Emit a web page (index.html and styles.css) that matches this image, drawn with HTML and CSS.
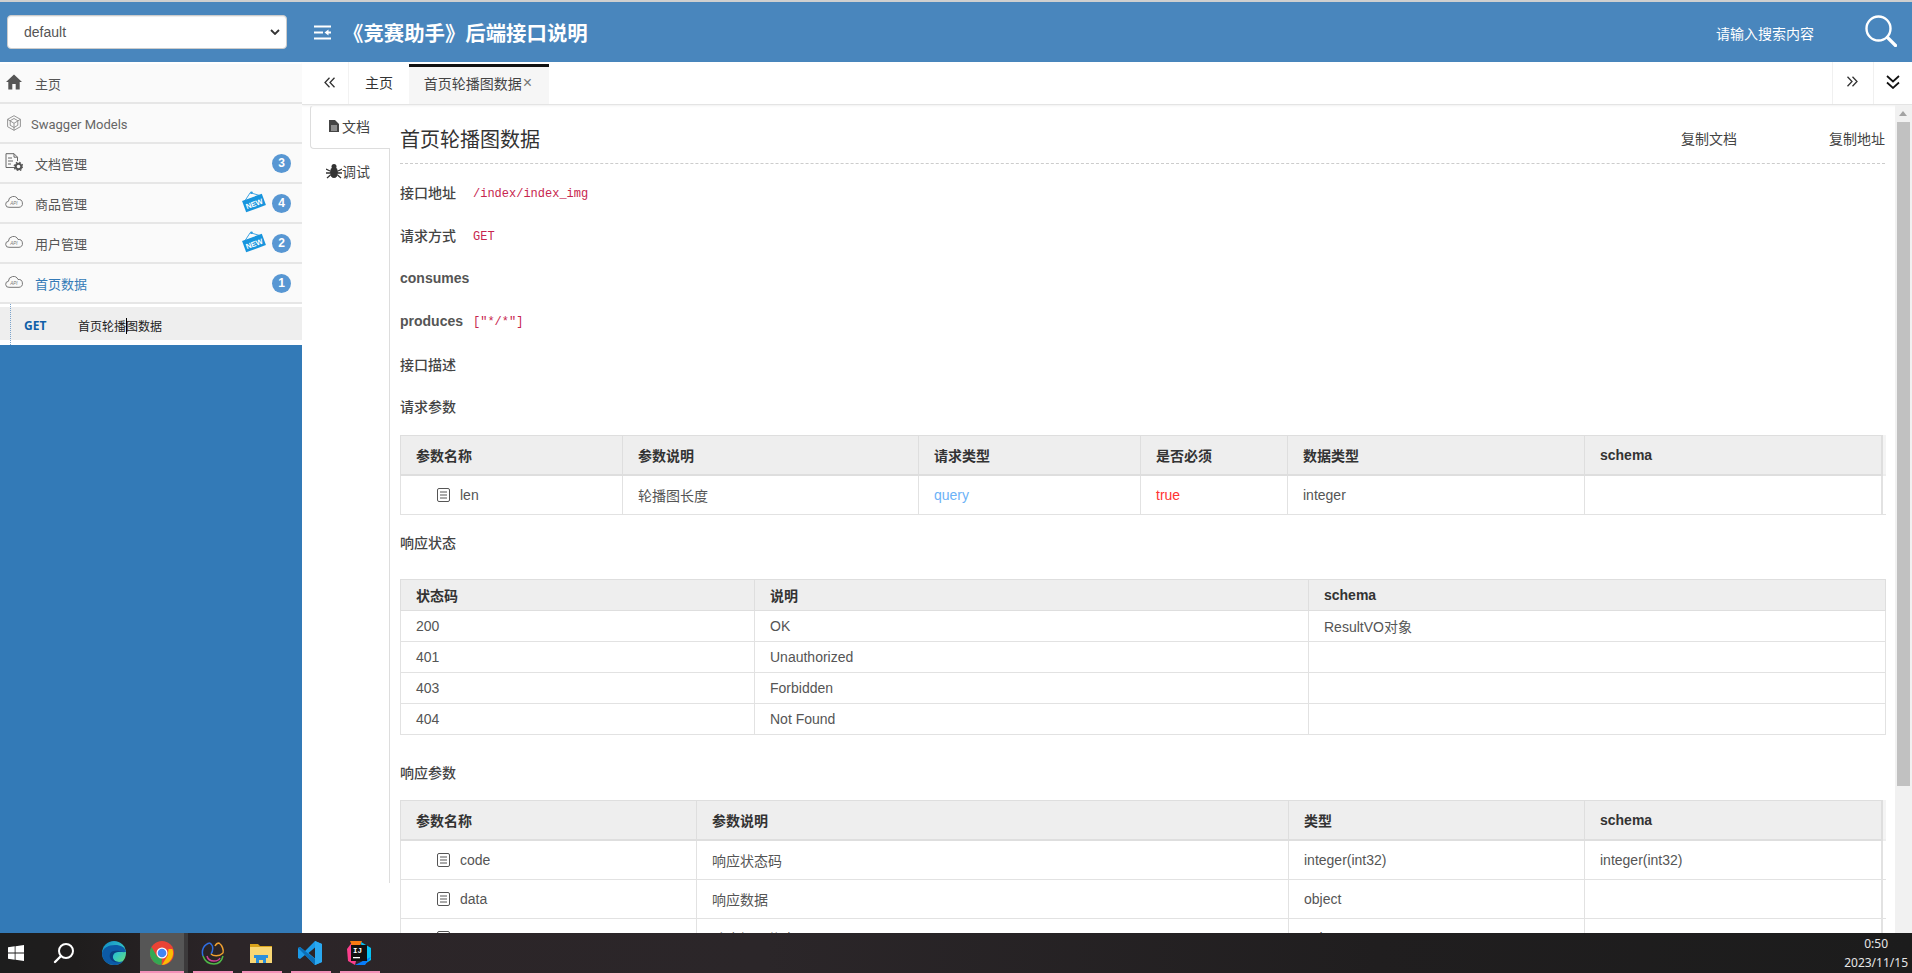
FILE: index.html
```html
<!DOCTYPE html>
<html lang="zh-CN">
<head>
<meta charset="utf-8">
<title>《竞赛助手》后端接口说明</title>
<link rel="stylesheet" href="styles.css">
</head>
<body>
<div class="app">
  <header class="topbar">
    <div class="select-box"><span>default</span>
      <svg class="select-arrow" viewBox="0 0 10 6" width="10" height="6"><path d="M1 1l4 4 4-4" fill="none" stroke="#333" stroke-width="1.8"/></svg>
    </div>
    <svg class="collapse-icon" viewBox="0 0 17 15" width="17" height="15"><path d="M0 1.500h17M0 7.500h9M0 13.500h17M17 7.500h-4" stroke="#fff" stroke-width="2.200" fill="none"/><path d="M14.500 4.500l-4 3 4 3z" fill="#fff"/></svg>
    <h1 class="app-title">《竞赛助手》后端接口说明</h1>
    <div class="search-text">请输入搜索内容</div>
    <svg class="search-icon" viewBox="0 0 32 32" width="32" height="32"><circle cx="13.500" cy="13.500" r="12" fill="none" stroke="#fff" stroke-width="2.400"/><path d="M22.500 22.500l8 8" stroke="#fff" stroke-width="3.200" stroke-linecap="round"/></svg>
  </header>

  <div class="main">
    <aside class="sidebar">
      <nav class="menu">
        <div class="menu-row">
          <svg class="menu-icon icon-home" viewBox="0 0 16 16" width="16" height="16"><path d="M8 .5L0 8h2.300v7.500h4V10h3.400v5.500h4V8H16z" fill="#555"/></svg>
          <span class="menu-text">主页</span>
        </div>
        <div class="menu-row">
          <svg class="menu-icon icon-hex" viewBox="0 0 16 16" width="16" height="16"><g fill="none" stroke="#8a8a8a" stroke-width=".9"><path d="M8 .7l6.400 3.600v7.400L8 15.300l-6.400-3.600V4.300z"/><path d="M8 3.500l3.800 2.200v4.600L8 12.500l-3.800-2.200V5.700zM1.600 4.300l6.400 4 6.400-4M8 8.300v7"/></g></svg>
          <span class="menu-text models">Swagger Models</span>
        </div>
        <div class="menu-row">
          <svg class="menu-icon icon-doc" viewBox="0 0 18 18" width="18" height="18"><path d="M11 14.500H1V.7h8l3.500 3.500V8M9 .7v3.500h3.500M3 5h4M3 8h5M3 11h3" fill="none" stroke="#666" stroke-width="1"/><circle cx="13.500" cy="13.500" r="2.800" fill="none" stroke="#555" stroke-width="2"/><circle cx="13.500" cy="13.500" r="4.300" fill="none" stroke="#555" stroke-width="1.100" stroke-dasharray="1.600 1.800"/></svg>
          <span class="menu-text">文档管理</span>
          <span class="badge">3</span>
        </div>
        <div class="menu-row">
          <svg class="menu-icon icon-cloud" viewBox="0 0 18 12" width="18" height="12"><path d="M4 11.300a3 3 0 01-.600-6A5 5 0 0113 3.500a3.900 3.900 0 011 7.800z" fill="none" stroke="#777" stroke-width="1"/><text class="api-text" x="9" y="9">API</text></svg>
          <span class="menu-text">商品管理</span>
          <svg class="new-tag" viewBox="0 0 24 22" width="24" height="22"><g transform="rotate(-20 12 12)"><path d="M12 1L4 7h16z" fill="none" stroke="#2a9be0" stroke-width=".8"/><rect x="1.500" y="6" width="21" height="12" fill="#1895dd"/><text class="new-text" x="12" y="15.500">NEW</text></g><circle cx="9.500" cy="1.800" r="1.300" fill="#2a9be0"/></svg>
          <span class="badge">4</span>
        </div>
        <div class="menu-row">
          <svg class="menu-icon icon-cloud" viewBox="0 0 18 12" width="18" height="12"><path d="M4 11.300a3 3 0 01-.600-6A5 5 0 0113 3.500a3.900 3.900 0 011 7.800z" fill="none" stroke="#777" stroke-width="1"/><text class="api-text" x="9" y="9">API</text></svg>
          <span class="menu-text">用户管理</span>
          <svg class="new-tag" viewBox="0 0 24 22" width="24" height="22"><g transform="rotate(-20 12 12)"><path d="M12 1L4 7h16z" fill="none" stroke="#2a9be0" stroke-width=".8"/><rect x="1.500" y="6" width="21" height="12" fill="#1895dd"/><text class="new-text" x="12" y="15.500">NEW</text></g><circle cx="9.500" cy="1.800" r="1.300" fill="#2a9be0"/></svg>
          <span class="badge">2</span>
        </div>
        <div class="menu-row">
          <svg class="menu-icon icon-cloud" viewBox="0 0 18 12" width="18" height="12"><path d="M4 11.300a3 3 0 01-.600-6A5 5 0 0113 3.500a3.900 3.900 0 011 7.800z" fill="none" stroke="#777" stroke-width="1"/><text class="api-text" x="9" y="9">API</text></svg>
          <span class="menu-text active">首页数据</span>
          <span class="badge">1</span>
        </div>
        <div class="submenu">
          <div class="sub-row">
            <span class="sub-method">GET</span>
            <span class="sub-text">首页轮播图数据</span>
            <i class="ibeam"></i>
          </div>
        </div>
      </nav>
    </aside>

    <section class="workspace">
      <div class="tabbar">
        <div class="tab-btn tab-prev">
          <svg viewBox="0 0 12 11" width="12" height="11"><path d="M5.500 .7L1 5.500l4.500 4.800M10.500 .7L6 5.500l4.500 4.800" fill="none" stroke="#333" stroke-width="1.300"/></svg>
        </div>
        <div class="tab">主页</div>
        <div class="tab tab-active">首页轮播图数据<span class="tab-close">×</span></div>
        <div class="tab-spacer"></div>
        <div class="tab-btn tab-next">
          <svg viewBox="0 0 12 11" width="12" height="11"><path d="M1.500 .7L6 5.500l-4.500 4.800M6.500 .7L11 5.500l-4.500 4.800" fill="none" stroke="#333" stroke-width="1.300"/></svg>
        </div>
        <div class="tab-btn tab-down">
          <svg viewBox="0 0 14 14" width="14" height="14"><path d="M1 1l6 5.500L13 1M1 7.500L7 13l6-5.500" fill="none" stroke="#111" stroke-width="1.700"/></svg>
        </div>
      </div>

      <div class="pane">
        <div class="doc-tabs">
          <div class="doc-tab doc-tab-on">
            <svg viewBox="0 0 10 12" width="10" height="12"><path d="M0 0h6l4 4v8H0z" fill="#444"/><path d="M2 6h6M2 8h6M2 10h6" stroke="#fff" stroke-width=".8"/></svg>文档
          </div>
          <div class="doc-tab doc-tab-debug">
            <svg viewBox="0 0 16 16" width="16" height="16"><ellipse cx="8" cy="9.500" rx="4" ry="5.500" fill="#333"/><circle cx="8" cy="3.500" r="2.500" fill="#333"/><path d="M0 6l4 2M16 6l-4 2M0 10h4M16 10h-4M1 15l3.500-3M15 15l-3.500-3" stroke="#333" stroke-width="1.300"/></svg>调试
          </div>
          <div class="doc-rail"></div>
        </div>

        <article class="doc">
          <div class="doc-head">
            <h2 class="doc-title">首页轮播图数据</h2>
            <div class="doc-actions"><span>复制文档</span><span>复制地址</span></div>
          </div>

          <div class="fields">
            <div class="field"><b>接口地址</b><code>/index/index_img</code></div>
            <div class="field"><b>请求方式</b><code>GET</code></div>
            <div class="field"><b class="latin">consumes</b></div>
            <div class="field"><b class="latin">produces</b><code>["*/*"]</code></div>
            <div class="field"><b>接口描述</b></div>
            <div class="field"><b>请求参数</b></div>
          </div>

          <table class="grid grid-req">
            <colgroup><col class="c1"><col class="c2"><col class="c3"><col class="c4"><col class="c5"><col class="c6"><col class="c7"></colgroup>
            <thead><tr><th>参数名称</th><th>参数说明</th><th>请求类型</th><th>是否必须</th><th>数据类型</th><th>schema</th><th class="edge"></th></tr></thead>
            <tbody><tr>
              <td class="param"><svg class="row-icon" viewBox="0 0 13 14" width="13" height="14"><rect x=".5" y=".5" width="12" height="13" rx="1.500" fill="none" stroke="#555"/><path d="M3 4h7M3 7h7M3 10h7" stroke="#555"/></svg>len</td>
              <td>轮播图长度</td><td class="q">query</td><td class="t">true</td><td>integer</td><td></td><td class="edge"></td>
            </tr></tbody>
          </table>

          <div class="sec sec-status">响应状态</div>
          <table class="grid grid-status">
            <colgroup><col class="s1"><col class="s2"><col class="s3"></colgroup>
            <thead><tr><th>状态码</th><th>说明</th><th>schema</th></tr></thead>
            <tbody>
              <tr><td>200</td><td>OK</td><td>ResultVO对象</td></tr>
              <tr><td>401</td><td>Unauthorized</td><td></td></tr>
              <tr><td>403</td><td>Forbidden</td><td></td></tr>
              <tr><td>404</td><td>Not Found</td><td></td></tr>
            </tbody>
          </table>

          <div class="sec sec-resp">响应参数</div>
          <table class="grid grid-resp">
            <colgroup><col class="r1"><col class="r2"><col class="r3"><col class="r4"><col class="r5"></colgroup>
            <thead><tr><th>参数名称</th><th>参数说明</th><th>类型</th><th>schema</th><th class="edge"></th></tr></thead>
            <tbody>
              <tr><td class="param"><svg class="row-icon" viewBox="0 0 13 14" width="13" height="14"><rect x=".5" y=".5" width="12" height="13" rx="1.500" fill="none" stroke="#555"/><path d="M3 4h7M3 7h7M3 10h7" stroke="#555"/></svg>code</td><td>响应状态码</td><td>integer(int32)</td><td>integer(int32)</td><td class="edge"></td></tr>
              <tr><td class="param"><svg class="row-icon" viewBox="0 0 13 14" width="13" height="14"><rect x=".5" y=".5" width="12" height="13" rx="1.500" fill="none" stroke="#555"/><path d="M3 4h7M3 7h7M3 10h7" stroke="#555"/></svg>data</td><td>响应数据</td><td>object</td><td></td><td class="edge"></td></tr>
              <tr><td class="param"><svg class="row-icon" viewBox="0 0 13 14" width="13" height="14"><rect x=".5" y=".5" width="12" height="13" rx="1.500" fill="none" stroke="#555"/><path d="M3 4h7M3 7h7M3 10h7" stroke="#555"/></svg>msg</td><td>响应提示信息</td><td>string</td><td></td><td class="edge"></td></tr>
            </tbody>
          </table>
        </article>

        <div class="scrollbar">
          <div class="sb-arrow sb-up"></div>
          <div class="sb-thumb"></div>
          <div class="sb-arrow sb-down"></div>
        </div>
      </div>
    </section>
  </div>

  <footer class="taskbar">
    <div class="task-cell task-win">
      <svg viewBox="0 0 16 16" width="16" height="16"><path d="M0 2.300l6.700-1v6.300H0zM7.500 1.200L16 0v7.600H7.500zM0 8.400h6.700v6.300L0 13.700zM7.500 8.400H16V16l-8.500-1.200z" fill="#fff"/></svg>
    </div>
    <div class="task-cell task-search">
      <svg viewBox="0 0 22 22" width="22" height="22"><circle cx="13" cy="9" r="7" fill="none" stroke="#fff" stroke-width="2"/><path d="M8 14l-6 6" stroke="#fff" stroke-width="2.400" stroke-linecap="round"/></svg>
    </div>
    <div class="task-cell task-edge">
      <svg viewBox="0 0 24 24" width="24" height="24"><defs><linearGradient id="eg" x1="0" y1="0" x2="1" y2="1"><stop offset="0" stop-color="#0d86c9"/><stop offset=".6" stop-color="#34c6c4"/><stop offset="1" stop-color="#6fe06a"/></linearGradient></defs><circle cx="12" cy="12" r="12" fill="url(#eg)"/><path d="M0 12C0 20 6 24 12 24c5 0 8-2 9-4-4 2-9 1-10-3-1-3 1-6 5-6h8C23 6 19 4 13 4 6 4 1 7 0 12z" fill="#0c5aa6"/><path d="M12 10c-3 0-5 3-4 7 1 3 5 5 9 4-4 0-7-3-6-6 .3-2 2-4 5-4 3-.500 5 0 7 1-1-1-7-3-11-2z" fill="#0a3f80"/></svg>
    </div>
    <div class="task-cell task-chrome">
      <svg viewBox="0 0 24 24" width="24" height="24"><circle cx="12" cy="12" r="12" fill="#ea4335"/><path d="M12 24A12 12 0 011.600 6L7 15.500 12 17.500l-.500 6.500z" fill="#34a853"/><path d="M12 24l5.700-9.500.800-6.500H22.400A12 12 0 0112 24z" fill="#fbbc04"/><circle cx="12" cy="12" r="5.500" fill="#fff"/><circle cx="12" cy="12" r="4.300" fill="#4285f4"/></svg>
    </div>
    <div class="task-sep"></div>
    <div class="task-cell task-nav">
      <svg viewBox="0 0 24 24" width="24" height="24" fill="none" stroke-width="1.500"><path d="M9 2C3 3 0 9 2 15" stroke="#2f6de0"/><path d="M9 2c4 3 3 8 1 11" stroke="#2f6de0"/><path d="M14 5c1-2 3-3 4-3 3 2 5 7 4 10" stroke="#f0a030"/><path d="M10 13c2 2 8 3 12-1" stroke="#f0a030"/><path d="M2 15c2 6 7 8 11 8 5 0 8-4 9-8" stroke="#4fb848"/><path d="M6 15c1 4 4 5 7 5 3 0 5-1 6-3" stroke="#d23f9a"/></svg>
    </div>
    <div class="task-cell task-folder">
      <svg viewBox="0 0 22 22" width="22" height="22"><path d="M0 2h8l2 2h12v3H0z" fill="#d9a31c"/><path d="M0 5h22v16H0z" fill="#f8d775"/><path d="M6 14h10v7h-3v-3H9v3H6z" fill="#2a8fdc"/><path d="M4 13h14v3H4z" fill="#2a8fdc"/></svg>
    </div>
    <div class="task-cell task-code">
      <svg viewBox="0 0 24 24" width="24" height="24"><path d="M17 0l7 3v18l-7 3L7 14l-5 4-2-1V7l2-1 5 4zM17 6.500L10.500 12l6.500 5.500z" fill="#1b9ae8"/><path d="M17 0l7 3v18l-7 3z" fill="#2aa8f0"/><path d="M0 7l2-1 15 12v6L0 7z" fill="#0b6fb8"/></svg>
    </div>
    <div class="task-cell task-idea">
      <svg viewBox="0 0 24 24" width="24" height="24"><path d="M0 8L6 0h8l-6 24-7-4z" fill="#fc3e8c"/><path d="M3 0h12L9 14z" fill="#f97a12"/><path d="M14 1l10 6v12l-8 5z" fill="#07c3f2"/><path d="M8 24l16-8-6 8z" fill="#087cfa"/><rect x="4" y="4" width="16" height="16" fill="#111"/><path d="M6 16h7v1.300H6z" fill="#fff"/><text class="ij-text" x="6" y="12">IJ</text></svg>
    </div>
    <div class="task-grow"></div>
    <div class="clock"><div>0:50</div><div>2023/11/15</div></div>
    <div class="underlines">
      <i class="u u1"></i><i class="u u2"></i><i class="u u3"></i><i class="u u4"></i><i class="u u5"></i>
    </div>
  </footer>
</div>
</body>
</html>
```

FILE: styles.css
```css
* { box-sizing: border-box; }
html, body { margin: 0; padding: 0; height: 100%; overflow: hidden; }
body { font-family: "Liberation Sans", "Noto Sans CJK SC", sans-serif; font-size: 14px; color: #555; background: #fff; }
.app { width: 1912px; height: 973px; display: flex; flex-direction: column; }

/* top bar */
.topbar { flex: none; height: 62px; border-top: 2px solid #cfcfcf; background: #4986bd; display: flex; align-items: center; color: #fff; }
.select-box { width: 280px; height: 34px; margin-left: 7px; background: #fff; border: 1px solid #ccc; border-radius: 4px; display: flex; align-items: center; justify-content: space-between; padding: 0 6px 0 16px; color: #555; font-size: 14px; box-shadow: inset 0 1px 1px rgba(0,0,0,.075); }
.collapse-icon { margin-left: 27px; flex: none; }
.app-title { margin: 0; padding-left: 12px; width: 1385px; font-size: 20.400px; font-weight: 700; line-height: 28px; color: #fff; white-space: nowrap; flex: none; font-family: "Noto Sans CJK SC", sans-serif; }
.search-text { width: 149px; padding-top: 2px; font-size: 14px; color: #fff; flex: none; }
.search-icon { flex: none; margin-top: -2px; }

/* layout */
.main { flex: 1; min-height: 0; display: flex; }
.sidebar { flex: none; width: 302px; background: #337ab7; }
.menu { background: #fff; padding-top: 2px; padding-bottom: 5px; }
.menu-row { height: 40px; background: #fafafa; border-bottom: 2px solid #e6e6e6; display: flex; align-items: center; padding: 3px 11px 0 0; position: relative; color: #555; font-size: 13px; }
.menu-icon { position: absolute; left: 5px; }
.icon-home { left: 6px; top: 10px; }
.icon-hex { left: 6px; top: 11px; }
.icon-doc { top: 9px; }
.icon-cloud { top: 12px; }
.menu-text { margin-left: 35px; flex: 1; font-family: "Noto Sans CJK SC", sans-serif; line-height: 20px; padding-bottom: 2px; }
.menu-text.models { margin-left: 31px; padding-bottom: 0; font-family: Roboto, "Liberation Sans", sans-serif; font-size: 13px; color: #666; }
.menu-text.active { color: #337ab7; }
.badge { flex: none; width: 19px; height: 19px; border-radius: 50%; background: #5897d3; color: #fff; font-size: 12px; font-weight: 700; line-height: 18px; text-align: center; margin-top: -2px; }
.new-tag { flex: none; margin-right: 6px; margin-top: -6px; }
.api-text { font-family: "Liberation Sans", sans-serif; font-size: 4.500px; font-style: italic; fill: #777; text-anchor: middle; }
.new-text { font-family: "Liberation Sans", sans-serif; font-size: 7.500px; font-weight: 700; fill: #fff; text-anchor: middle; }

.submenu { margin-top: 3px; position: relative; }
.sub-row { height: 33px; background: #eee; display: flex; align-items: center; padding: 4px 0 0 24px; position: relative; font-size: 12px; }
.submenu::before { content: ""; position: absolute; left: 10px; top: -3px; bottom: -5px; border-left: 1px dotted #7aa3cc; z-index: 1; }
.sub-method { width: 54px; font-weight: 700; color: #0f5fa8; font-family: "Open Sans", "Liberation Sans", sans-serif; }
.sub-text { color: #222; font-family: "Noto Sans CJK SC", sans-serif; }
.ibeam { position: absolute; left: 126px; top: 11px; width: 1px; height: 16px; background: #000; }

/* tabs */
.workspace { flex: 1; min-width: 0; display: flex; flex-direction: column; }
.tabbar { flex: none; height: 43px; display: flex; align-items: stretch; border-bottom: 1px solid #e4e4e4; box-shadow: 0 1px 2px rgba(0,0,0,.06); background: #fff; }
.tab-btn { flex: none; display: flex; align-items: center; justify-content: center; padding-bottom: 3px; }
.tab-prev { width: 47px; border-right: 1px solid #f2f2f2; padding-left: 9px; padding-bottom: 1px; }
.tab-next { width: 41px; border-left: 1px solid #f0f0f0; padding-right: 2px; }
.tab-down { width: 39px; border-left: 1px solid #f0f0f0; }
.tab { flex: none; width: 60px; display: flex; align-items: center; justify-content: center; color: #333; font-family: "Noto Sans CJK SC", sans-serif; font-size: 14px; padding-bottom: 3px; }
.tab-active { width: 140px; background: #f6f6f6; border-top: 3px solid #111; padding: 0 2px 6px 0; color: #444; margin-top: 2px; }
.tab-close { color: #777; margin-left: 1px; font-family: "Liberation Sans", sans-serif; font-size: 16px; }
.tab-spacer { flex: 1; }

/* pane */
.pane { flex: 1; min-height: 0; display: flex; overflow: hidden; }
.doc-tabs { flex: none; width: 88px; padding-left: 8px; display: flex; flex-direction: column; }
.doc-tab { height: 44px; display: flex; align-items: center; justify-content: center; gap: 3px; color: #444; font-family: "Noto Sans CJK SC", sans-serif; font-size: 14px; padding: 0 6px 3px 4px; }
.doc-tab-on { border: 1px solid #ddd; border-right: 0; border-top-color: #f0f0f0; border-radius: 4px 0 0 4px; }
.doc-tab-debug { border-right: 1px solid #ddd; height: 46px; padding: 0 7px 2px 4px; gap: 0; }
.doc-rail { height: 688px; border-right: 1px solid #ddd; }

.doc { flex: 1; min-width: 0; padding: 0 10px; overflow: hidden; }
.doc-head { height: 59px; padding-top: 9px; border-bottom: 1px dashed #ccc; display: flex; align-items: center; justify-content: space-between; }
.doc-title { margin: 0; font-size: 20px; font-weight: 400; color: #333; font-family: "Noto Sans CJK SC", sans-serif; line-height: 28px; }
.doc-actions { display: flex; gap: 92px; color: #444; font-size: 14px; font-family: "Noto Sans CJK SC", sans-serif; padding-bottom: 2px; }

.fields { margin-top: 8px; }
.field { height: 42.800px; display: flex; align-items: center; }
.field b { font-size: 14px; font-weight: 500; color: #444; width: 73px; flex: none; font-family: "Noto Sans CJK SC", sans-serif; white-space: nowrap; padding-bottom: 2px; }
.field b.latin { font-family: "Liberation Sans", sans-serif; font-weight: 700; color: #555; }
.field code { font-family: "Liberation Mono", monospace; font-size: 12px; color: #c7254e; padding-top: 1px; }

/* tables */
.grid { width: 1485px; table-layout: fixed; border-collapse: collapse; font-size: 14px; }
.grid-req { margin-top: 6px; }
.grid th, .grid td { border: 1px solid #e2e2e2; padding: 0 15px; text-align: left; overflow: hidden; white-space: nowrap; }
.grid th { background: #eee; color: #333; font-weight: 700; font-size: 14px; height: 40px; border-bottom-width: 2px; border-color: #dedede; }
.grid td { height: 39px; color: #555; }
.grid .edge { padding: 0; border-left: 2px solid #e2e2e2; border-right: 0; border-top: 0; }
.grid th.edge { background: #f4f4f4; border-bottom: 2px solid #eee; border-left: 2px solid #dedede; }
.grid .param { padding-left: 36px; }
.row-icon { margin-right: 10px; vertical-align: -2px; }
.grid .q { color: #6cb2f7; }
.grid .t { color: #f33; }
.c1 { width: 222px; } .c2 { width: 296px; } .c3 { width: 222px; } .c4 { width: 147px; } .c5 { width: 297px; } .c6 { width: 297px; } .c7 { width: 4px; }
.r1 { width: 296px; } .r2 { width: 592px; } .r3 { width: 296px; } .r4 { width: 297px; } .r5 { width: 4px; }
.s1 { width: 354px; } .s2 { width: 554px; } .s3 { width: 577px; }
.grid-status th { height: 31px; border-bottom-width: 1px; }
.grid-status td { height: 31px; }

.sec { height: 20px; line-height: 20px; font-size: 14px; color: #444; font-family: "Noto Sans CJK SC", sans-serif; font-weight: 500; }
.sec-status { margin-top: 17px; margin-bottom: 27px; }
.sec-resp { margin-top: 27px; margin-bottom: 18px; }

/* scrollbar */
.scrollbar { flex: none; width: 17px; background: #f1f1f1; display: flex; flex-direction: column; }
.sb-arrow { flex: none; height: 17px; position: relative; }
.sb-arrow::after { content: ""; position: absolute; left: 4px; border-left: 4px solid transparent; border-right: 4px solid transparent; }
.sb-up::after { top: 6px; border-bottom: 5px solid #a3a3a3; }
.sb-down::after { top: 6px; border-top: 5px solid #505050; }
.sb-thumb { flex: none; height: 664px; margin: 0 2px 147px; background: #c1c1c1; }

/* taskbar */
.taskbar { flex: none; height: 40px; display: flex; align-items: center; position: relative; background: linear-gradient(90deg, #1d1d1d 0, #1f1d1d 4%, #2c2528 12%, #2b2629 40%, #201e1f 72%, #1c1c1c 100%); }
.task-cell { flex: none; display: flex; align-items: center; justify-content: center; height: 40px; padding-bottom: 1px; }
.task-win { width: 32px; }
.task-search { width: 44px; margin-left: 9px; padding-left: 2px; }
.task-edge { width: 48px; margin-left: 2px; padding-left: 6px; }
.task-chrome { width: 44px; background: #565656; margin-left: 5px; }
.task-sep { flex: none; width: 4px; height: 40px; background: #3c3a3b; }
.task-nav { width: 48px; margin-left: 1px; }
.task-folder { width: 48px; }
.task-code { width: 49px; }
.task-idea { width: 49px; }
.task-grow { flex: 1; }
.clock { flex: none; width: 70px; margin-right: 4px; color: #e6e6e6; font-size: 12px; line-height: 19px; text-align: right; font-family: "Noto Sans", sans-serif; }
.clock div:first-child { padding-right: 20px; }
.underlines { position: absolute; left: 0; right: 0; bottom: 0; height: 2px; }
.u { position: absolute; top: 0; height: 2px; background: #f48fb8; }
.u1 { left: 140px; width: 44px; }
.u2 { left: 193px; width: 40px; }
.u3 { left: 242px; width: 40px; }
.u4 { left: 291px; width: 40px; }
.u5 { left: 340px; width: 40px; }
.ij-text { font-family: "Liberation Mono", monospace; font-size: 7.500px; font-weight: 700; fill: #fff; }
```
